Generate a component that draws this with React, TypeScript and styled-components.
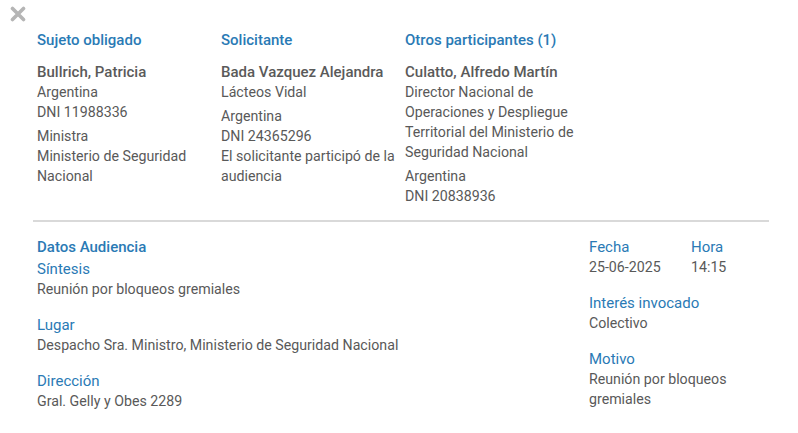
import React from 'react'
import styled, { createGlobalStyle } from 'styled-components'

const GlobalStyle = createGlobalStyle`
  html, body {
    margin: 0;
    padding: 0;
    background: #ffffff;
  }
  body {
    font-family: Roboto, "Liberation Sans", Arial, sans-serif;
    font-size: 14.2px;
    line-height: 20px;
    color: #595959;
  }
`

const Page = styled.div`
  width: 798px;
  height: 433px;
  box-sizing: border-box;
  overflow: hidden;
`

const TopBar = styled.div`
  display: flex;
  padding: 6px 0 0 10px;
  height: 16px;
`

const CloseButton = styled.button`
  display: flex;
  align-items: center;
  justify-content: center;
  width: 16px;
  height: 16px;
  padding: 0;
  border: 0;
  background: none;
  cursor: pointer;
`

const Parties = styled.div`
  display: grid;
  grid-template-columns: 184px 184px 184px;
  padding: 8px 0 0 37px;
`

const Column = styled.div`
  display: flex;
  flex-direction: column;
`

const Heading = styled.div`
  color: #2a7ab5;
  font-size: 15px;
  font-weight: 500;
  margin-bottom: 12px;
`

const Name = styled.div`
  color: #5a5a5a;
  font-size: 15px;
  font-weight: 500;
`

const Group = styled.div`
  & + & {
    margin-top: 4px;
  }
`

const Line = styled.div``

const Divider = styled.hr`
  margin: 14px 29px 0 33px;
  border: 0;
  border-top: 2px solid #d9d9d9;
  height: 0;
`

const Details = styled.div`
  display: flex;
  justify-content: space-between;
  padding: 15px 29px 0 37px;
`

const DetailColumn = styled.div<{ $width?: number }>`
  display: flex;
  flex-direction: column;
  width: ${({ $width }) => ($width ? `${$width}px` : 'auto')};
`

const SectionTitle = styled.div`
  color: #2a7ab5;
  font-size: 15px;
  font-weight: 500;
  margin-bottom: 2px;
`

const Field = styled.div`
  & + & {
    margin-top: 16px;
  }
`

const FieldRow = styled.div`
  display: flex;
`

const FieldCell = styled.div<{ $width?: number }>`
  width: ${({ $width }) => ($width ? `${$width}px` : 'auto')};
`

const Label = styled.div`
  color: #2a7ab5;
  font-size: 15px;
`

const Value = styled.div`
  color: #595959;
`

const CloseIcon = () => (
  <svg width="16" height="16" viewBox="0 0 16 16">
    <path
      d="M2.5 2.5 L13.5 13.5 M13.5 2.5 L2.5 13.5"
      stroke="#b5b5b5"
      strokeWidth="3.6"
      strokeLinecap="round"
    />
  </svg>
)

type Party = {
  title: string
  name: string
  groups: string[][]
}

const parties: Party[] = [
  {
    title: 'Sujeto obligado',
    name: 'Bullrich, Patricia',
    groups: [
      ['Argentina', 'DNI 11988336'],
      ['Ministra', 'Ministerio de Seguridad Nacional'],
    ],
  },
  {
    title: 'Solicitante',
    name: 'Bada Vazquez Alejandra',
    groups: [
      ['Lácteos Vidal'],
      ['Argentina', 'DNI 24365296', 'El solicitante participó de la audiencia'],
    ],
  },
  {
    title: 'Otros participantes (1)',
    name: 'Culatto, Alfredo Martín',
    groups: [
      ['Director Nacional de Operaciones y Despliegue Territorial del Ministerio de Seguridad Nacional'],
      ['Argentina', 'DNI 20838936'],
    ],
  },
]

const leftFields = [
  { label: 'Síntesis', value: 'Reunión por bloqueos gremiales' },
  { label: 'Lugar', value: 'Despacho Sra. Ministro, Ministerio de Seguridad Nacional' },
  { label: 'Dirección', value: 'Gral. Gelly y Obes 2289' },
]

export default function App() {
  return (
    <Page>
      <GlobalStyle />
      <TopBar>
        <CloseButton aria-label="Cerrar">
          <CloseIcon />
        </CloseButton>
      </TopBar>

      <Parties>
        {parties.map((p) => (
          <Column key={p.title}>
            <Heading>{p.title}</Heading>
            <Name>{p.name}</Name>
            {p.groups.map((g, i) => (
              <Group key={i}>
                {g.map((l) => (
                  <Line key={l}>{l}</Line>
                ))}
              </Group>
            ))}
          </Column>
        ))}
      </Parties>

      <Divider />

      <Details>
        <DetailColumn>
          <SectionTitle>Datos Audiencia</SectionTitle>
          {leftFields.map((f) => (
            <Field key={f.label}>
              <Label>{f.label}</Label>
              <Value>{f.value}</Value>
            </Field>
          ))}
        </DetailColumn>

        <DetailColumn $width={180}>
          <Field>
            <FieldRow>
              <FieldCell $width={102}>
                <Label>Fecha</Label>
                <Value>25-06-2025</Value>
              </FieldCell>
              <FieldCell>
                <Label>Hora</Label>
                <Value>14:15</Value>
              </FieldCell>
            </FieldRow>
          </Field>
          <Field>
            <Label>Interés invocado</Label>
            <Value>Colectivo</Value>
          </Field>
          <Field>
            <Label>Motivo</Label>
            <Value>Reunión por bloqueos gremiales</Value>
          </Field>
        </DetailColumn>
      </Details>
    </Page>
  )
}
